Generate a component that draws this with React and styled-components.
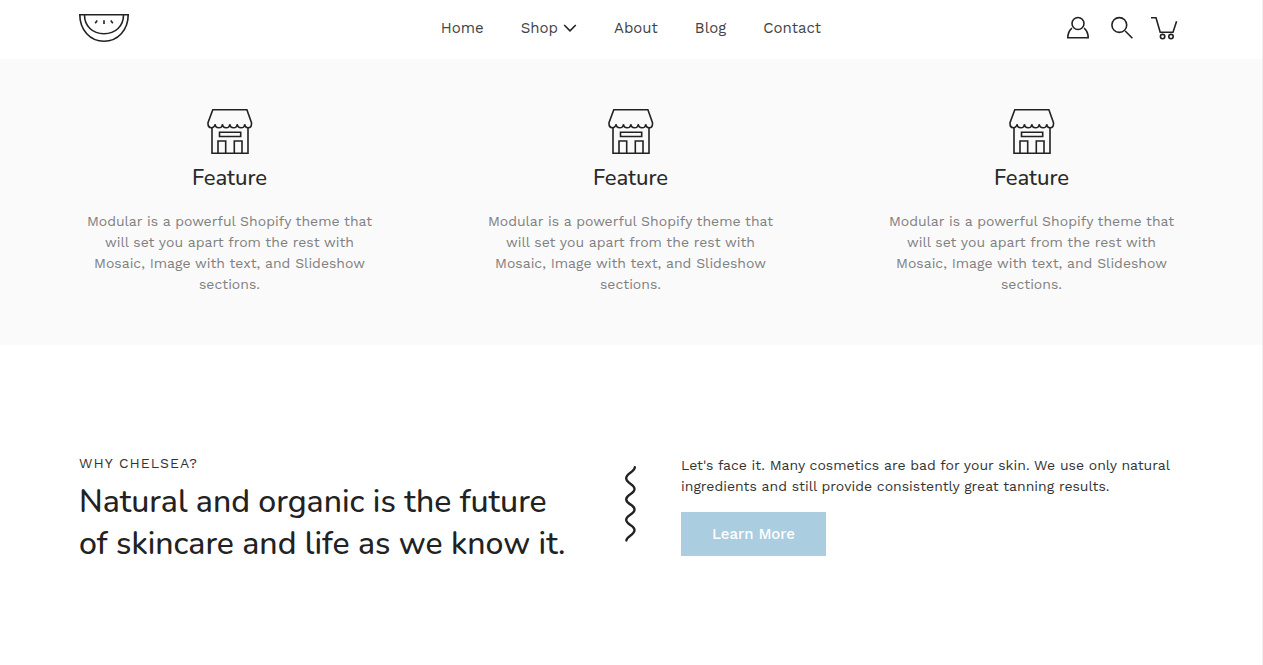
import * as React from 'react';
import styled, { createGlobalStyle } from 'styled-components';

const features = [1, 2, 3].map(id => ({
  id,
  title: 'Feature',
  text:
    'Modular is a powerful Shopify theme that will set you apart from the rest with Mosaic, Image with text, and Slideshow sections.',
}));

const links = ['Home', 'Shop', 'About', 'Blog', 'Contact'];

export default () => (
  <Page>
    <GlobalStyle />
    <Header>
      <IconLink href="#home" aria-label="Chelsea">
        <Logo />
      </IconLink>
      <Nav>
        {links.map(link => (
          <NavLink key={link} href={`#${link.toLowerCase()}`}>
            {link}
            {link === 'Shop' && <Chevron />}
          </NavLink>
        ))}
      </Nav>
      <Tools>
        <IconLink href="#account" aria-label="Account">
          <Account />
        </IconLink>
        <IconButton type="button" aria-label="Search">
          <Search />
        </IconButton>
        <IconLink href="#cart" aria-label="Cart">
          <Cart />
        </IconLink>
      </Tools>
    </Header>
    <main>
      <Features>
        {features.map(feature => (
          <Feature key={feature.id}>
            <Store />
            <FeatureTitle>{feature.title}</FeatureTitle>
            <FeatureText>{feature.text}</FeatureText>
          </Feature>
        ))}
      </Features>
      <Why>
        <Intro>
          <Eyebrow>Why Chelsea?</Eyebrow>
          <Title>
            Natural and organic is the future of skincare and life as we know
            it.
          </Title>
        </Intro>
        <Squiggle />
        <div>
          <Copy>
            Let's face it. Many cosmetics are bad for your skin. We use only
            natural ingredients and still provide consistently great tanning
            results.
          </Copy>
          <Button type="button">Learn More</Button>
        </div>
      </Why>
    </main>
  </Page>
);

const Logo = () => (
  <Icon width="50" height="30" viewBox="0 0 50 30">
    <path d="M0.8 1.8H49.2C49.2 17 38.8 28.2 25 28.2S0.8 17 0.8 1.8Z" />
    <path d="M5.5 2C5.5 13 13.5 20.7 25 20.7S44.5 13 44.5 2" />
    <path d="M18.2 7.5L16.2 10.2M25 7.3V11M31.8 7.5L33.8 10.2" />
  </Icon>
);

const Chevron = () => (
  <Icon width="14" height="10" viewBox="0 0 14 10">
    <path d="M1.2 2L7 7.8L12.8 2" />
  </Icon>
);

const Account = () => (
  <Icon width="22" height="24" viewBox="0 0 22 24">
    <circle cx="11" cy="7.5" r="6" />
    <path d="M4.9 12.2C2.3 14.3 0.9 17.5 0.8 21.8H21.2C21.1 17.5 19.7 14.3 17.1 12.2" />
  </Icon>
);

const Search = () => (
  <Icon width="22" height="24" viewBox="0 0 22 24">
    <circle cx="8.3" cy="9" r="7.4" />
    <path d="M14.2 15L21.4 22.2" />
  </Icon>
);

const Cart = () => (
  <Icon width="27" height="24" viewBox="0 0 27 24">
    <path d="M0 1.8H5L9.2 16.2H22L25.6 5.2" />
    <circle cx="11.6" cy="20.6" r="2.2" />
    <circle cx="20" cy="20.6" r="2.2" />
  </Icon>
);

const Store = () => (
  <Icon width="46" height="48" viewBox="0 0 46 48">
    <path d="M5.8 1.7H39.9L44.5 14.7C44.9 21.3 38.2 21 37.7 16.2C37.3 21 30.8 21 30.2 16.2C29.8 21 23.3 21 22.8 16.2C22.4 21 15.9 21 15.4 16.2C15 21 8.5 21 8 16.2C7.6 21 0.6 21.3 1 14.7Z" />
    <path d="M5 19.5V45.3H41V19.5" />
    <path d="M12.5 24.3H33.7V28.5H12.5Z" />
    <path d="M11 45V33H18.7V45M27.3 45V33H35V45" />
  </Icon>
);

const Squiggle = () => (
  <Wave width="16" height="78" viewBox="0 0 16 78">
    <path d="M11.8 2.3C11.8 7 3.2 8 3.2 13.3C3.2 18.5 11.5 18.8 11.5 24C11.5 29.2 3.2 29.2 3.2 34.3C3.2 39.4 11.5 39.4 11.5 44.6C11.5 49.8 3.2 49.8 3.2 54.8C3.2 59.8 11.5 60 11.5 65C11.5 70.2 3.6 71 3.4 75.5" />
  </Wave>
);

const GlobalStyle = createGlobalStyle`
  body {
    margin: 0;
    background: #fff;
    color: #333;
    font-family: 'Work Sans', Inter, sans-serif;
    font-size: 14px;
    line-height: 21px;
  }

  * {
    box-sizing: border-box;
  }
`;

const Page = styled.div`
  min-height: 100vh;
  border-right: 1px solid #f0f0f0;
`;

const Header = styled.header`
  display: grid;
  grid-template-columns: 1fr auto 1fr;
  align-items: center;
  padding: 12px 84px 15px 79px;
`;

const Nav = styled.nav`
  display: flex;
  gap: 37px;
  padding-left: 5px;
`;

const NavLink = styled.a`
  display: flex;
  align-items: center;
  gap: 5px;
  color: #444;
  font-size: 15px;
  line-height: 32px;
  text-decoration: none;
`;

const Tools = styled.div`
  display: flex;
  justify-content: flex-end;
  align-items: center;
  gap: 18px;
`;

const IconLink = styled.a`
  display: flex;
`;

const IconButton = styled.button`
  display: flex;
  margin: 0 0 0 4px;
  padding: 0;
  border: 0;
  background: none;
`;

const Icon = styled.svg`
  display: block;
  flex: none;
  fill: none;
  stroke: #222;
  stroke-width: 1.6;
`;

const Features = styled.section`
  display: grid;
  grid-template-columns: repeat(3, 1fr);
  gap: 100px;
  padding: 49px 80px 50px 79px;
  background: #fafafa;
`;

const Feature = styled.article`
  display: flex;
  flex-direction: column;
  align-items: center;
  text-align: center;
`;

const FeatureTitle = styled.h3`
  margin: 7px 0 17px;
  color: #2a2a2a;
  font-family: Nunito, 'Open Sans', sans-serif;
  font-size: 22px;
  font-weight: 500;
  line-height: 31px;
`;

const FeatureText = styled.p`
  margin: 0;
  color: #808080;
`;

const Why = styled.section`
  display: grid;
  grid-template-columns: 1fr 100px 1fr;
  padding: 108px 79px 100px;
`;

const Intro = styled.div`
  padding-right: 10px;
`;

const Eyebrow = styled.p`
  margin: 0 0 7px;
  letter-spacing: 1px;
  text-transform: uppercase;
`;

const Title = styled.h2`
  margin: 0;
  color: #222;
  font-family: Nunito, 'Open Sans', sans-serif;
  font-size: 32px;
  font-weight: 500;
  line-height: 42px;
`;

const Wave = styled(Icon)`
  justify-self: center;
  margin-top: 12px;
  stroke-width: 2.4;
  stroke-linecap: round;
`;

const Copy = styled.p`
  margin: 2px 0 15px;
`;

const Button = styled.button`
  padding: 0 31px;
  border: 0;
  background: #abcde0;
  color: #fff;
  font-family: inherit;
  font-size: 15px;
  font-weight: 500;
  line-height: 44px;
`;
